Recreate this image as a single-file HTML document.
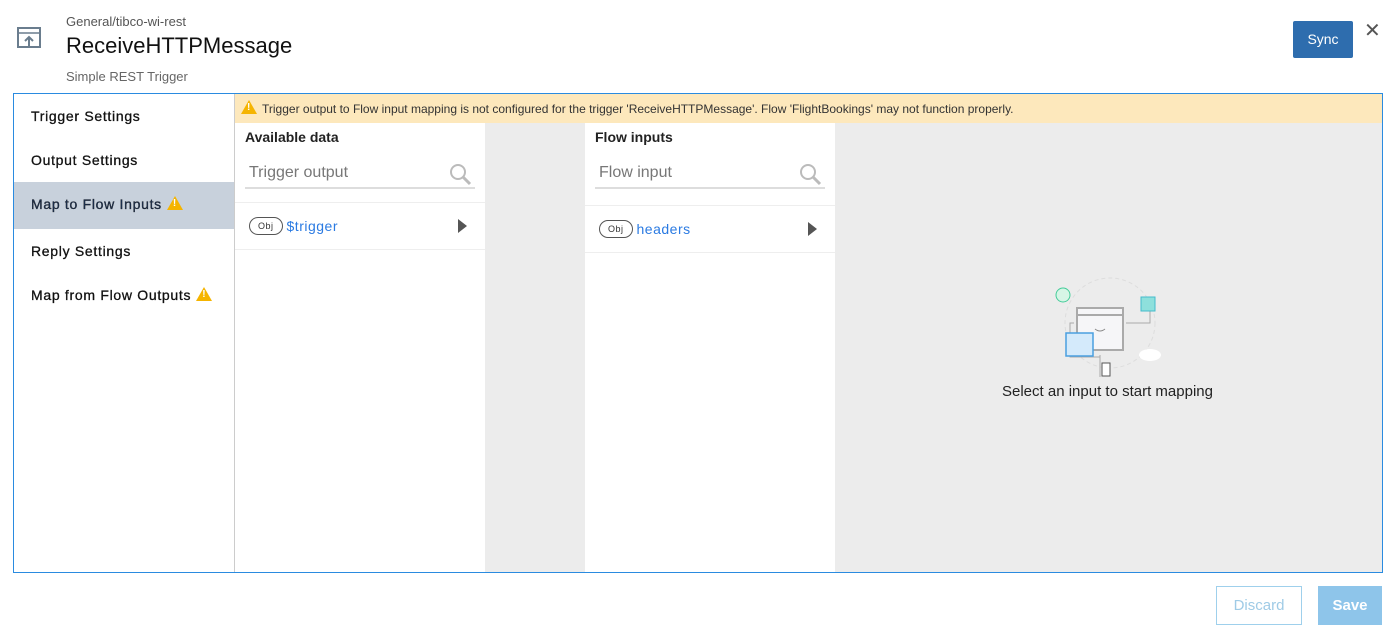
<!DOCTYPE html><html><head><style>
body{margin:0;width:1394px;height:637px;background:#fff;font-family:"Liberation Sans",sans-serif;position:relative;overflow:hidden;color:#222}
.a{position:absolute}
.nav{left:14px;width:220px;height:44px;line-height:44px;padding-left:17px;box-sizing:border-box;font-size:14px;letter-spacing:.7px;color:#111;-webkit-text-stroke:.3px #111}
.warn{display:inline-block;width:0;height:0;border-left:8px solid transparent;border-right:8px solid transparent;border-bottom:14px solid #f5b400;vertical-align:-1px;margin-left:5px;position:relative;-webkit-text-stroke:0}
.warn:after{content:"!";position:absolute;left:-2px;top:2px;font-size:10px;line-height:11px;color:#fff;font-weight:bold}
.search{height:30px;border-bottom:2px solid #ddd;font-size:16px;color:#777;line-height:28px;padding-left:4px;box-sizing:border-box}
.obj{display:inline-block;border:1px solid #555;border-radius:9px;font-size:9px;line-height:12px;padding:2px 8px;color:#333;vertical-align:2px;margin-right:4px}
.row{height:48px;border-top:1px solid #eee;border-bottom:1px solid #eee;line-height:46px;padding-left:14px;box-sizing:border-box;font-size:14px;color:#2a7ae2;letter-spacing:.5px}
.tri{position:absolute;right:18px;top:16px;width:0;height:0;border-top:7px solid transparent;border-bottom:7px solid transparent;border-left:9px solid #555}
</style></head><body>
<svg class="a" style="left:17px;top:27px" width="25" height="23" viewBox="0 0 25 23"><rect x="1" y="1" width="22" height="19" fill="none" stroke="#6a7d8e" stroke-width="2"/><line x1="1" y1="6" x2="23" y2="6" stroke="#6a7d8e" stroke-width="1.5"/><path d="M12 21V11M8 14l4-4 4 4" fill="none" stroke="#6a7d8e" stroke-width="2"/></svg>
<div class="a" style="left:66px;top:14px;font-size:13px;color:#555">General/tibco-wi-rest</div>
<div class="a" style="left:66px;top:33px;font-size:22px;color:#111">ReceiveHTTPMessage</div>
<div class="a" style="left:66px;top:69px;font-size:13px;color:#666">Simple REST Trigger</div>
<div class="a" style="left:1293px;top:21px;width:60px;height:37px;background:#2e6dae;color:#fff;font-size:14px;line-height:37px;text-align:center;border-radius:2px">Sync</div>
<div class="a" style="left:1364px;top:18px;font-size:20px;color:#555">✕</div>
<div class="a" style="left:13px;top:93px;width:1370px;height:480px;border:1px solid #2a8be0;box-sizing:border-box"></div>
<div class="a" style="left:234px;top:94px;width:1px;height:478px;background:#ccc"></div>
<div class="a nav" style="top:94px">Trigger Settings</div>
<div class="a nav" style="top:138px">Output Settings</div>
<div class="a nav" style="top:182px;height:47px;line-height:45px;background:#c8d1dc;color:#1c3050">Map to Flow Inputs<span class="warn"></span></div>
<div class="a nav" style="top:229px">Reply Settings</div>
<div class="a nav" style="top:273px">Map from Flow Outputs<span class="warn"></span></div>
<div class="a" style="left:235px;top:94px;width:1147px;height:29px;background:#fde8bc;font-size:12px;line-height:31px;padding-left:6px;box-sizing:border-box;color:#333;white-space:nowrap"><span class="warn" style="margin:0 5px 0 0"></span>Trigger output to Flow input mapping is not configured for the trigger 'ReceiveHTTPMessage'. Flow 'FlightBookings' may not function properly.</div>
<div class="a" style="left:485px;top:123px;width:100px;height:449px;background:#ececec"></div>
<div class="a" style="left:835px;top:123px;width:547px;height:449px;background:#ececec"></div>
<div class="a" style="left:245px;top:129px;font-size:14px;font-weight:bold">Available data</div>
<div class="a search" style="left:245px;top:159px;width:230px">Trigger output</div>
<div class="a row" style="left:235px;top:202px;width:250px"><span class="obj">Obj</span>$trigger<span class="tri"></span></div>
<div class="a" style="left:595px;top:129px;font-size:14px;font-weight:bold">Flow inputs</div>
<div class="a search" style="left:595px;top:159px;width:230px">Flow input</div>
<div class="a row" style="left:585px;top:205px;width:250px"><span class="obj">Obj</span>headers<span class="tri"></span></div>
<svg class="a" style="left:449px;top:163px" width="24" height="24"><circle cx="9" cy="9" r="7" fill="none" stroke="#bbb" stroke-width="2"/><line x1="14" y1="14" x2="21" y2="21" stroke="#bbb" stroke-width="3"/></svg>
<svg class="a" style="left:799px;top:163px" width="24" height="24"><circle cx="9" cy="9" r="7" fill="none" stroke="#bbb" stroke-width="2"/><line x1="14" y1="14" x2="21" y2="21" stroke="#bbb" stroke-width="3"/></svg>
<svg class="a" style="left:1050px;top:275px" width="120" height="110"><circle cx="60" cy="48" r="45" fill="none" stroke="#ddd" stroke-dasharray="4 3"/><circle cx="13" cy="20" r="7" fill="#d6f5e6" stroke="#4c9"/><path d="M24 48h-4v34h30M76 48h24V30M50 80v22" fill="none" stroke="#aaa"/><rect x="27" y="33" width="46" height="42" fill="#f6f6f8" stroke="#aaa" stroke-width="2"/><line x1="27" y1="40" x2="73" y2="40" stroke="#aaa" stroke-width="2"/><path d="M45 54q5 4 10 0" fill="none" stroke="#888"/><rect x="91" y="22" width="14" height="14" fill="#8ee0dc" stroke="#4bc"/><rect x="16" y="58" width="27" height="23" fill="#d4eafb" stroke="#4a9fe0" stroke-width="1.5"/><ellipse cx="100" cy="80" rx="11" ry="6" fill="#fff"/><rect x="52" y="88" width="8" height="13" fill="#fff" stroke="#555"/></svg>
<div class="a" style="left:1002px;top:383px;font-size:15px;color:#222">Select an input to start mapping</div>
<div class="a" style="left:1216px;top:586px;width:86px;height:39px;border:1px solid #9fd0ec;box-sizing:border-box;color:#9fcbe6;font-size:15px;line-height:37px;text-align:center">Discard</div>
<div class="a" style="left:1318px;top:586px;width:64px;height:39px;background:#8ec5ea;color:#fff;font-size:15px;line-height:39px;text-align:center;font-weight:bold">Save</div>
</body></html>
